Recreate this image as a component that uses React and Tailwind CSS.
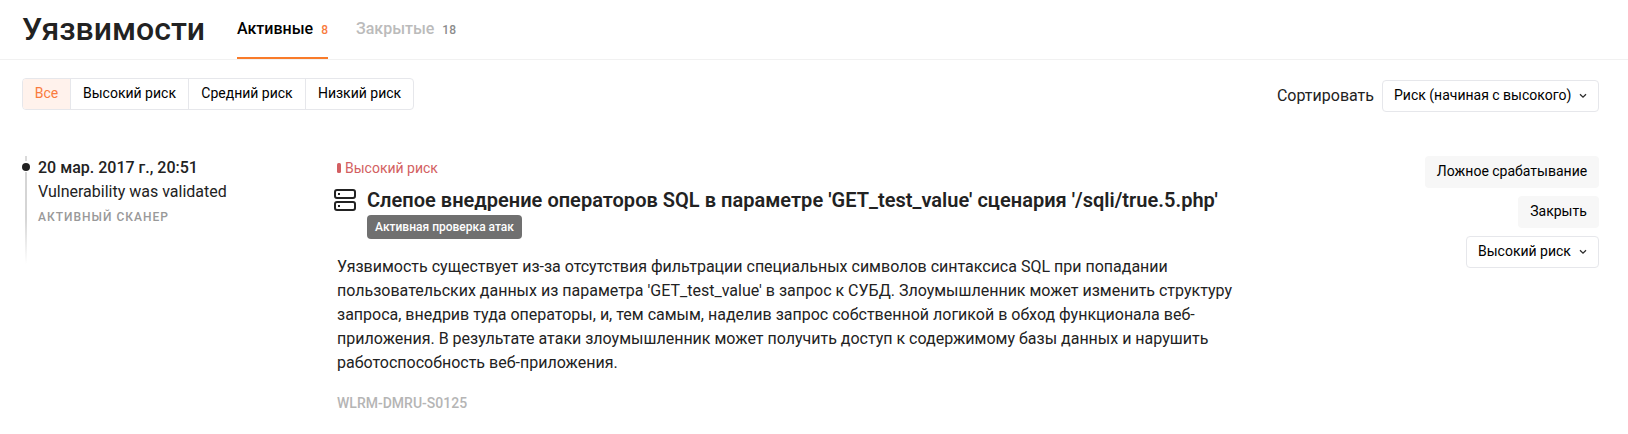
import React from 'react';

const filters = [
  { label: 'Все', width: 'w-[48px]' },
  { label: 'Высокий риск', width: 'w-[118px]' },
  { label: 'Средний риск', width: 'w-[117px]' },
  { label: 'Низкий риск', width: 'w-[107px]' },
];

function Chevron() {
  return (
    <svg width="8" height="6" viewBox="0 0 8 6" fill="none" className="mt-0.5 shrink-0">
      <path d="M1 1.2 4 4.1 7 1.2" stroke="#2b2b2b" strokeWidth="1.3" />
    </svg>
  );
}

function Select({ children, className }) {
  return (
    <button
      className={
        'flex h-8 items-center justify-between rounded border border-[#e6e7eb] bg-white pr-[11px] pb-0.5 pl-[11px] text-sm text-black ' +
        className
      }
    >
      <span className="whitespace-nowrap">{children}</span>
      <Chevron />
    </button>
  );
}

function Header() {
  return (
    <header className="flex h-[60px] items-start border-b border-[#f1f1f1] pl-[22px]">
      <h1 className="w-[215px] pt-[9px] text-[32px] leading-10 font-medium whitespace-nowrap">Уязвимости</h1>
      <nav className="flex">
        <a className="flex h-[59px] w-[91px] items-baseline justify-between border-b-2 border-[#f97b29] pt-[17px] text-base font-medium text-black">
          Активные <span className="text-xs text-[#f97b3d]">8</span>
        </a>
        <a className="ml-[28px] flex h-[59px] w-[100px] items-baseline justify-between pt-[17px] text-base font-medium text-[#bbbbbb]">
          Закрытые <span className="text-xs text-[#8c8c8c]">18</span>
        </a>
      </nav>
    </header>
  );
}

function Toolbar() {
  return (
    <div className="flex items-start justify-between pt-[18px] pr-[29px] pl-[22px]">
      <div className="flex h-8 divide-x divide-[#e6e7eb] overflow-hidden rounded border border-[#e6e7eb] text-sm">
        {filters.map((f, i) => (
          <button
            key={f.label}
            className={
              'box-border flex items-center justify-center pb-0.5 whitespace-nowrap ' +
              f.width +
              (i === 0 ? ' bg-[#fff2ec] text-[#f97b3d]' : ' text-black')
            }
          >
            {f.label}
          </button>
        ))}
      </div>
      <div className="flex items-center gap-2 pt-0.5">
        <span className="text-base">Сортировать</span>
        <Select className="w-[217px]">Риск (начиная с высокого)</Select>
      </div>
    </div>
  );
}

function Timeline() {
  return (
    <div className="flex w-[315px] shrink-0">
      <div className="flex w-2 flex-col items-center">
        <div className="h-[5px] w-0.5 bg-[#dadada]" />
        <div className="mt-[2px] mb-px h-2 w-2 rounded-full bg-[#222222]" />
        <div className="h-[92px] w-0.5 bg-linear-to-b from-[#d5d5d5] from-50% to-white" />
      </div>
      <div className="pl-2">
        <div className="text-base leading-6 font-medium">20 мар. 2017 г., 20:51</div>
        <div className="text-base leading-6">Vulnerability was validated</div>
        <div className="pt-px text-xs leading-6 font-medium tracking-[1px] text-[#999999]">АКТИВНЫЙ СКАНЕР</div>
      </div>
    </div>
  );
}

function Vulnerability() {
  return (
    <article className="w-[920px]">
      <div className="flex h-6 items-center gap-1 text-sm text-[#d35f62]">
        <span className="h-2.5 w-1 rounded-[1.5px] bg-[#d35f62]" />
        Высокий риск
      </div>
      <div className="ml-[-3px] flex items-start pt-[7px]">
        <svg width="22" height="22" viewBox="0 0 22 22" fill="none" stroke="#222222" strokeWidth="2" className="mt-[2px] shrink-0">
          <rect x="1" y="1" width="20" height="8" rx="2" />
          <rect x="1" y="13" width="20" height="8" rx="2" />
          <rect x="4" y="4" width="2" height="2" fill="#222222" stroke="none" />
          <rect x="4" y="16" width="2" height="2" fill="#222222" stroke="none" />
        </svg>
        <div className="pl-[11px]">
          <h2 className="text-xl leading-[26px] font-semibold tracking-[0.022px] whitespace-nowrap">
            Слепое внедрение операторов SQL в параметре 'GET_test_value' сценария '/sqli/true.5.php'
          </h2>
          <div className="mt-[2px] flex h-6 w-[155px] items-center justify-center rounded bg-[#707070] text-xs font-medium whitespace-nowrap text-white">
            Активная проверка атак
          </div>
        </div>
      </div>
      <p className="pt-4 text-base leading-6 whitespace-nowrap">
        Уязвимость существует из-за отсутствия фильтрации специальных символов синтаксиса SQL при попадании
        <br />
        пользовательских данных из параметра 'GET_test_value' в запрос к СУБД. Злоумышленник может изменить структуру
        <br />
        запроса, внедрив туда операторы, и, тем самым, наделив запрос собственной логикой в обход функционала веб-
        <br />
        приложения. В результате атаки злоумышленник может получить доступ к содержимому базы данных и нарушить
        <br />
        работоспособность веб-приложения.
      </p>
      <div className="pt-4 text-sm leading-6 font-medium text-[#b5b5b5]">WLRM-DMRU-S0125</div>
    </article>
  );
}

function Actions() {
  return (
    <div className="ml-auto flex flex-col items-end gap-2 text-sm text-black">
      <button className="h-8 w-[174px] rounded bg-[#f7f7f7] pb-0.5 whitespace-nowrap">Ложное срабатывание</button>
      <button className="h-8 w-[81px] rounded bg-[#f7f7f7] pb-0.5">Закрыть</button>
      <Select className="w-[133px]">Высокий риск</Select>
    </div>
  );
}

export default function App() {
  return (
    <div className="h-[434px] overflow-hidden bg-white font-['Roboto',sans-serif] text-[#222222]">
      <Header />
      <Toolbar />
      <main className="flex items-start pt-11 pr-[29px] pl-[22px]">
        <Timeline />
        <Vulnerability />
        <Actions />
      </main>
    </div>
  );
}
